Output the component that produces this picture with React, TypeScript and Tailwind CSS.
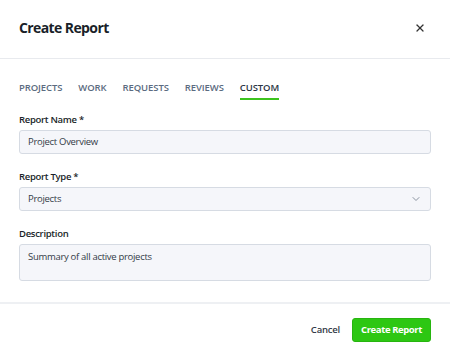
import { X, ChevronDown } from "lucide-react"

const tabs = ["PROJECTS", "WORK", "REQUESTS", "REVIEWS", "CUSTOM"]

export default function App() {
    return <div className="w-[450px] h-[356px] bg-white flex flex-col font-['Open_Sans',sans-serif] text-[#1f2937]">
        <div className="h-[59px] flex items-center justify-between px-[19px] pb-[2px] border-b border-[#e8eaee]">
            <div className="text-[14px] leading-[20px] font-bold tracking-[-0.6px] text-[#1a1f29]">Create Report</div>
            <X className="w-[12px] h-[12px] text-[#333] mr-[5px]" strokeWidth={2.5} />
        </div>

        <div className="px-[19px] flex-1 flex flex-col">
            <div className="flex gap-[16px] pt-[23px]">
                {tabs.map(t => (
                    <div key={t} className={"text-[9.5px] leading-[12px] font-semibold tracking-[-0.1px] pb-[4px] border-b-2 " + (t === "CUSTOM" ? "text-[#2b3544] border-[#3cc31e]" : "text-[#5b6b80] border-transparent")}>
                        {t}
                    </div>
                ))}
            </div>

            <div className="mt-[14px] text-[9.5px] leading-[12px] font-semibold tracking-[-0.3px] text-[#1a1f29]">Report Name *</div>
            <div className="mt-[4px] h-[24px] rounded-[3px] border border-[#d6dbe3] bg-[#f5f6fa] px-[8px] flex items-center text-[9.5px] tracking-[-0.3px] text-[#333b47]">
                Project Overview
            </div>

            <div className="mt-[17px] text-[9.5px] leading-[12px] font-semibold tracking-[-0.3px] text-[#1a1f29]">Report Type *</div>
            <div className="mt-[4px] h-[24px] rounded-[3px] border border-[#d6dbe3] bg-[#f5f6fa] px-[8px] flex items-center justify-between text-[9.5px] tracking-[-0.3px] text-[#333b47]">
                Projects
                <ChevronDown className="w-[12px] h-[12px] text-[#8a93a0]" strokeWidth={2} />
            </div>

            <div className="mt-[17px] text-[9.5px] leading-[12px] font-semibold tracking-[-0.3px] text-[#1a1f29]">Description</div>
            <div className="mt-[4px] h-[37px] rounded-[3px] border border-[#d6dbe3] bg-[#f5f6fa] px-[8px] pt-[5px] text-[9.5px] leading-[14px] tracking-[-0.3px] text-[#333b47]">
                Summary of all active projects
            </div>
        </div>

        <div className="h-[54px] border-t-2 border-[#eef0f3] flex items-center justify-end gap-[12px] px-[19px]">
            <div className="text-[9.5px] font-semibold tracking-[-0.2px] text-[#333b47]">Cancel</div>
            <div className="h-[24px] px-[8px] rounded-[3px] bg-[#2dc713] border border-[#27b50f] flex items-center text-[9.5px] font-bold tracking-[-0.4px] text-white">Create Report</div>
        </div>
    </div>
}
